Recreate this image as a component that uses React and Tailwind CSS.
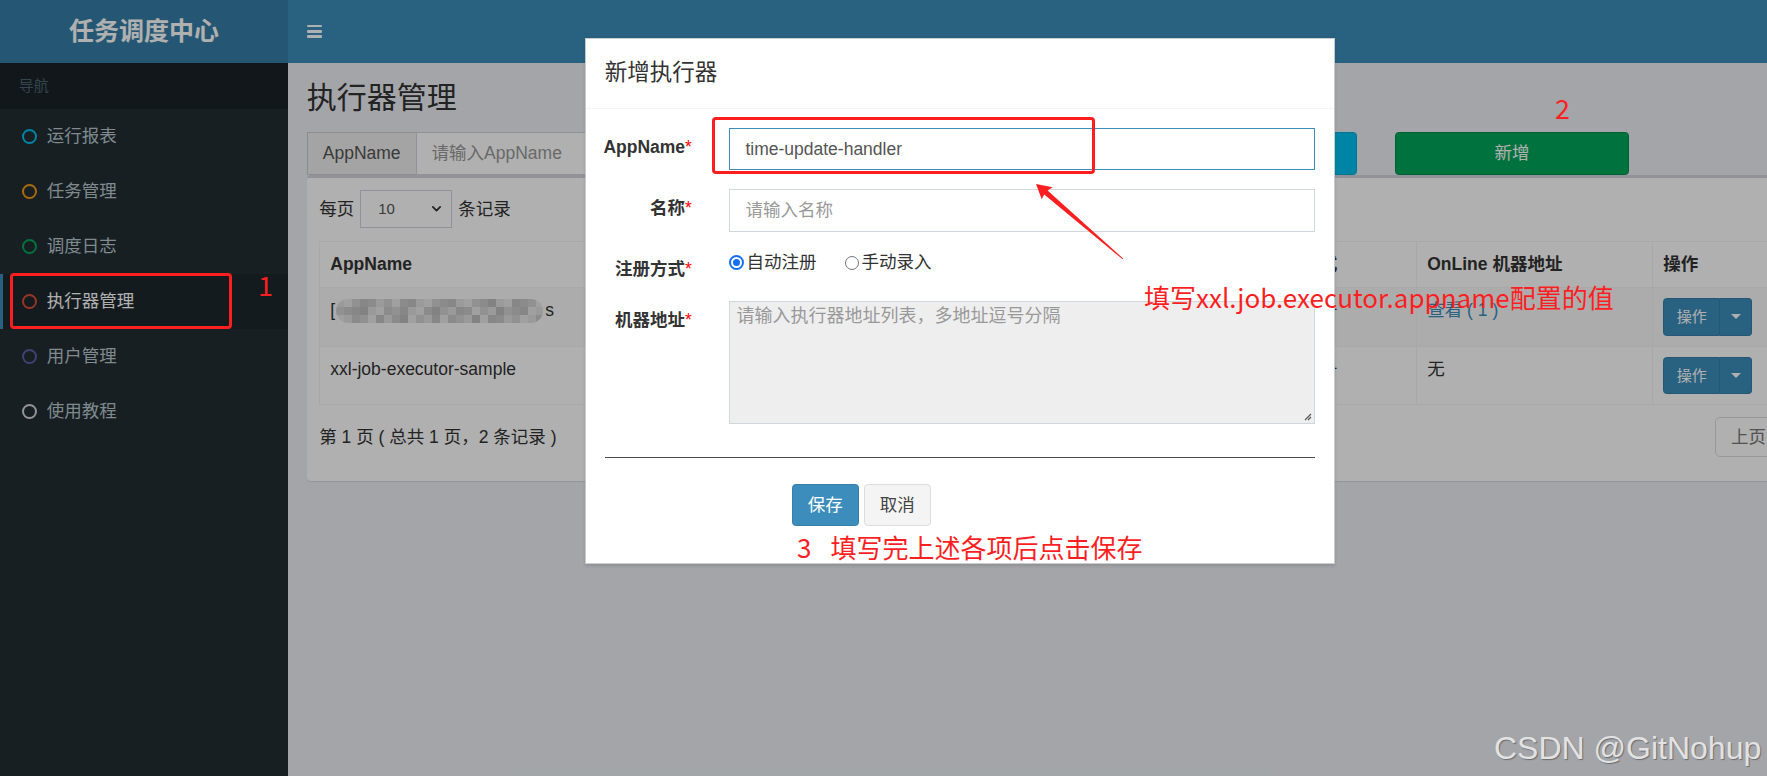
import React from 'react';

const menu = [
  { label: '运行报表', ring: 'border-[#00c0ef]' },
  { label: '任务管理', ring: 'border-[#f39c12]' },
  { label: '调度日志', ring: 'border-[#00a65a]' },
  { label: '执行器管理', ring: 'border-[#dd4b39]', active: true },
  { label: '用户管理', ring: 'border-[#605ca8]' },
  { label: '使用教程', ring: 'border-[#d2d6de]' },
];

const shades = ['bg-[#c4c4c4]', 'bg-[#d3d3d3]', 'bg-[#e0e0e0]', 'bg-[#cacaca]', 'bg-[#e8e8e8]', 'bg-[#bdbdbd]'];
const mosaic = [
  [2, 4, 1, 0, 3, 2, 1, 4, 3, 0, 2, 4, 1, 3, 0, 2, 4, 1, 3, 5, 2, 4, 0, 3, 1, 4],
  [1, 3, 0, 5, 2, 4, 3, 1, 0, 2, 4, 3, 5, 1, 2, 0, 3, 4, 1, 2, 5, 1, 3, 0, 4, 2],
  [4, 2, 3, 1, 4, 0, 2, 3, 5, 4, 1, 2, 0, 4, 3, 1, 2, 5, 4, 0, 3, 2, 1, 4, 2, 3],
];

function Mosaic() {
  return (
    <span className="inline-flex flex-col w-[207px] h-[24px] rounded-full overflow-hidden align-middle">
      {mosaic.map((row, i) => (
        <span key={i} className="flex h-[8px]">
          {row.map((s, j) => (
            <span key={j} className={'w-[8px] h-[8px] shrink-0 ' + shades[s]} />
          ))}
        </span>
      ))}
    </span>
  );
}

function OpButton() {
  return (
    <div className="inline-flex h-[37.5px] text-[15px] text-white">
      <div className="flex items-center px-[12.5px] bg-[#3c8dbc] border border-[#367fa9] rounded-l-[3.75px]">操作</div>
      <div className="flex items-center justify-center w-[32px] bg-[#3c8dbc] border border-l-0 border-[#367fa9] rounded-r-[3.75px]">
        <span className="w-0 h-0 border-x-[5px] border-x-transparent border-t-[5px] border-t-white" />
      </div>
    </div>
  );
}

function Label({ children }) {
  return (
    <div className="w-[124.67px] shrink-0 pr-[18.75px] pt-[7px] text-right font-bold text-[17.5px] leading-[25px] text-[#333]">
      {children}
      <span className="font-normal text-[#ff0000]">*</span>
    </div>
  );
}

export default function App() {
  return (
    <div className="relative w-[1767px] h-[776px] overflow-hidden font-['Liberation_Sans','Noto_Sans_CJK_SC',sans-serif]">
      <div className="relative w-[1920px] h-[776px] flex flex-col">
        {/* header */}
        <header className="h-[62.5px] flex shrink-0">
          <div className="w-[288px] bg-[#367fa9] flex items-center justify-center text-white font-bold text-[25px]">
            任务调度中心
          </div>
          <div className="flex-1 bg-[#3c8dbc] flex items-center pl-[18.75px]">
            <div className="flex flex-col gap-[2.75px] w-[15px]">
              <span className="h-[2.5px] bg-white rounded-[1px]" />
              <span className="h-[2.5px] bg-white rounded-[1px]" />
              <span className="h-[2.5px] bg-white rounded-[1px]" />
            </div>
          </div>
        </header>

        <div className="flex flex-1">
          {/* sidebar */}
          <aside className="w-[288px] shrink-0 bg-[#222d32]">
            <div className="bg-[#1a2226] text-[#4b646f] text-[15px] leading-[21.25px] py-[12.5px] pl-[18.75px]">导航</div>
            {menu.map((m) => (
              <div
                key={m.label}
                className={
                  m.active
                    ? 'h-[55px] flex items-center border-l-[3.75px] border-[#3c8dbc] bg-[#1e282c] pl-[18.75px] text-white'
                    : 'h-[55px] flex items-center border-l-[3.75px] border-transparent pl-[18.75px] text-[#b8c7ce]'
                }
              >
                <span className="w-[25px] shrink-0 flex items-center">
                  <span className={'w-[15px] h-[15px] rounded-full border-[2.5px] ' + m.ring} />
                </span>
                <span className="text-[17.5px] leading-[25px]">{m.label}</span>
              </div>
            ))}
          </aside>

          {/* content */}
          <main className="flex-1 bg-[#ecf0f5] px-[18.75px] pt-[17px] text-[#333]">
            <h1 className="text-[30px] leading-[36px]">执行器管理</h1>

            <div className="flex -mx-[18.75px] mt-[16.5px]">
              <div className="w-[408px] px-[18.75px]">
                <div className="flex h-[42.5px] text-[17.5px]">
                  <span className="flex items-center px-[15px] bg-[#eeeeee] border border-r-0 border-[#cccccc] text-[#555]">AppName</span>
                  <span className="flex-1 flex items-center px-[15px] bg-white border border-[#d2d6de] text-[#999]">请输入AppName</span>
                </div>
              </div>
              <div className="w-[408px] px-[18.75px]">
                <div className="flex h-[42.5px] text-[17.5px]">
                  <span className="flex items-center px-[15px] bg-[#eeeeee] border border-r-0 border-[#cccccc] text-[#555]">名称</span>
                  <span className="flex-1 flex items-center px-[15px] bg-white border border-[#d2d6de] text-[#999]">请输入名称</span>
                </div>
              </div>
              <div className="w-[272px] px-[18.75px]">
                <div className="h-[42.5px] flex items-center justify-center bg-[#00c0ef] border border-[#00acd6] rounded-[3.75px] text-white text-[17.5px]">搜索</div>
              </div>
              <div className="w-[272px] px-[18.75px]">
                <div className="h-[42.5px] flex items-center justify-center bg-[#00a65a] border border-[#008d4c] rounded-[3.75px] text-white text-[17.5px]">新增</div>
              </div>
            </div>

            {/* box */}
            <div className="bg-white border-t-[3px] border-[#d2d6de] rounded-[3.75px] shadow-[0_1px_1px_rgba(0,0,0,0.1)] p-[12.5px] text-[17.5px]">
              <div className="flex items-center h-[37.5px]">
                <span>每页</span>
                <span className="ml-[6px] w-[92px] h-[37.5px] border border-[#d2d6de] bg-white flex items-center justify-between pl-[17px] pr-[8px] text-[15px] text-[#555]">
                  10
                  <svg width="13" height="13" viewBox="0 0 16 16" fill="none" stroke="#333" strokeWidth="2.2" strokeLinecap="round" strokeLinejoin="round">
                    <path d="M3.5 6l4.5 4.5L12.5 6" />
                  </svg>
                </span>
                <span className="ml-[6px]">条记录</span>
              </div>

              <table className="mt-[13.5px] w-full table-fixed border-collapse">
                <colgroup>
                  <col className="w-[481px]" />
                  <col className="w-[456px]" />
                  <col className="w-[160px]" />
                  <col className="w-[236px]" />
                  <col />
                </colgroup>
                <thead>
                  <tr>
                    {['AppName', '名称', '注册方式', 'OnLine 机器地址', '操作'].map((h) => (
                      <th key={h} className="border border-[#f4f4f4] px-[10px] py-[10px] leading-[25px] text-left font-bold">{h}</th>
                    ))}
                  </tr>
                </thead>
                <tbody>
                  <tr className="bg-[#f9f9f9]">
                    <td className="align-top border border-[#f4f4f4] px-[10px] py-[10px] leading-[25px] text-[#333]">
                      <span className="inline-flex items-center">
                        <span className="mr-[1px]">[</span>
                        <Mosaic />
                        <span className="ml-[2px]">s</span>
                      </span>
                    </td>
                    <td className="align-top border border-[#f4f4f4] px-[10px] py-[10px] leading-[25px]">执行器</td>
                    <td className="align-top border border-[#f4f4f4] px-[10px] py-[10px] leading-[25px]">自动注册</td>
                    <td className="align-top border border-[#f4f4f4] px-[10px] py-[10px] leading-[25px] text-[#3c8dbc]">查看 ( 1 )</td>
                    <td className="align-top border border-[#f4f4f4] px-[10px] py-[10px] leading-[25px]"><OpButton /></td>
                  </tr>
                  <tr>
                    <td className="align-top border border-[#f4f4f4] px-[10px] py-[10px] leading-[25px]">xxl-job-executor-sample</td>
                    <td className="align-top border border-[#f4f4f4] px-[10px] py-[10px] leading-[25px]">示例执行器</td>
                    <td className="align-top border border-[#f4f4f4] px-[10px] py-[10px] leading-[25px]">自动注册</td>
                    <td className="align-top border border-[#f4f4f4] px-[10px] py-[10px] leading-[25px]">无</td>
                    <td className="align-top border border-[#f4f4f4] px-[10px] py-[10px] leading-[25px]"><OpButton /></td>
                  </tr>
                </tbody>
              </table>

              <div className="flex justify-between mt-[12px] mb-[11.5px]">
                <div className="pt-[7.5px] leading-[25px]">第 1 页 ( 总共 1 页，2 条记录 )</div>
                <div className="flex h-[40px]">
                  <span className="flex items-center px-[15px] border border-[#dddddd] rounded-l-[5px] text-[#777] bg-white">上页</span>
                  <span className="flex items-center px-[15px] border border-l-0 border-[#337ab7] bg-[#337ab7] text-white">1</span>
                  <span className="flex items-center px-[15px] border border-l-0 border-[#dddddd] rounded-r-[5px] text-[#777] bg-white">下页</span>
                </div>
              </div>
            </div>
          </main>
        </div>

        {/* backdrop + modal */}
        <div className="absolute inset-0 bg-black/[0.31]">
          <div className="mx-auto mt-[37.5px] w-[750px] bg-white border border-black/20 shadow-[0_2px_3px_rgba(0,0,0,0.125)] text-[17.5px] text-[#333]">
            <div className="p-[18.75px] border-b border-[#f4f4f4]">
              <h4 className="text-[22.5px] leading-[32px]">新增执行器</h4>
            </div>
            <div className="px-[18.75px] pt-[18.75px] pb-[37px]">
              <div className="flex -mx-[18.75px] mb-[18.75px]">
                <Label>AppName</Label>
                <div className="flex-1 px-[18.75px]">
                  <div className="h-[42.5px] border border-[#3c8dbc] px-[15px] flex items-center text-[#555]">time-update-handler</div>
                </div>
              </div>
              <div className="flex -mx-[18.75px] mb-[18.75px]">
                <Label>名称</Label>
                <div className="flex-1 px-[18.75px]">
                  <div className="h-[42.5px] border border-[#d2d6de] px-[15px] flex items-center text-[#999]">请输入名称</div>
                </div>
              </div>
              <div className="flex -mx-[18.75px] mb-[18.75px]">
                <Label>注册方式</Label>
                <div className="flex-1 px-[18.75px]">
                  <div className="flex items-center h-[25px] leading-[25px]">
                    <span className="w-[15px] h-[15px] rounded-full border-[2px] border-[#1570ef] flex items-center justify-center">
                      <span className="w-[7px] h-[7px] rounded-full bg-[#1570ef]" />
                    </span>
                    <span className="ml-[2px]">自动注册</span>
                    <span className="ml-[29px] w-[14px] h-[14px] rounded-full border-[1.5px] border-[#767676]" />
                    <span className="ml-[2px]">手动录入</span>
                  </div>
                </div>
              </div>
              <div className="flex -mx-[18.75px]">
                <Label>机器地址</Label>
                <div className="flex-1 px-[18.75px]">
                  <div className="relative h-[123px] border border-[#d2d6de] bg-[#eeeeee] pl-[6px] pt-[2px] text-[18px] leading-[25px] text-[#999]">
                    请输入执行器地址列表，多地址逗号分隔
                    <svg className="absolute right-[2px] bottom-[2px]" width="9" height="9" viewBox="0 0 9 9" stroke="#555" strokeWidth="1.2">
                      <path d="M8 2L2 8M8 5L5 8" />
                    </svg>
                  </div>
                </div>
              </div>

              <div className="mt-[33px] h-px bg-[#4a4a4a]" />

              <div className="mt-[25.5px] ml-[187px] flex gap-[5px]">
                <span className="h-[42.5px] px-[15px] flex items-center bg-[#3c8dbc] border border-[#367fa9] rounded-[3.75px] text-white">保存</span>
                <span className="h-[42.5px] px-[15px] flex items-center bg-[#f4f4f4] border border-[#dddddd] rounded-[3.75px] text-[#444]">取消</span>
              </div>
            </div>
          </div>
        </div>
      </div>

      {/* screenshot annotations */}
      <div className="absolute left-[9.6px] top-[273px] w-[222px] h-[56px] border-[3.5px] border-[#fd1f1f] rounded-[4px]" />
      <div className="absolute left-[258px] top-[267px] text-[27px] leading-[36px] text-[#fd1f1f] font-['Noto_Sans_CJK_SC',sans-serif]">1</div>
      <div className="absolute left-[1555px] top-[90px] text-[27px] leading-[36px] text-[#fd1f1f] font-['Noto_Sans_CJK_SC',sans-serif]">2</div>
      <div className="absolute left-[712px] top-[117px] w-[383px] h-[57px] border-[3.5px] border-[#fd1f1f] rounded-[4px]" />
      <svg className="absolute left-0 top-0 pointer-events-none" width="1767" height="776">
        <polygon
          fill="#fd1f1f"
          points="1036,184 1052.7,187.3 1047.6,190.6 1123.4,258.7 1122.6,259.3 1044.2,194.6 1041.7,199.3"
        />
      </svg>
      <div className="absolute left-[1144px] top-[281px] text-[26px] leading-[32px] text-[#fd1f1f] font-['Noto_Sans_CJK_SC',sans-serif] whitespace-nowrap">
        填写xxl.job.executor.appname配置的值
      </div>
      <div className="absolute left-[797px] top-[531px] flex items-center text-[#fd1f1f] font-['Noto_Sans_CJK_SC',sans-serif] leading-[32px] whitespace-nowrap">
        <span className="text-[26px]">3</span>
        <span className="ml-[19px] text-[26px]">填写完上述各项后点击保存</span>
      </div>
      <div className="absolute left-[1494px] top-[729px] text-[32px] leading-[38px] text-[#e2e2e2] whitespace-nowrap [text-shadow:1px_1px_1px_rgba(0,0,0,0.35)]">
        CSDN @GitNohup
      </div>
    </div>
  );
}
